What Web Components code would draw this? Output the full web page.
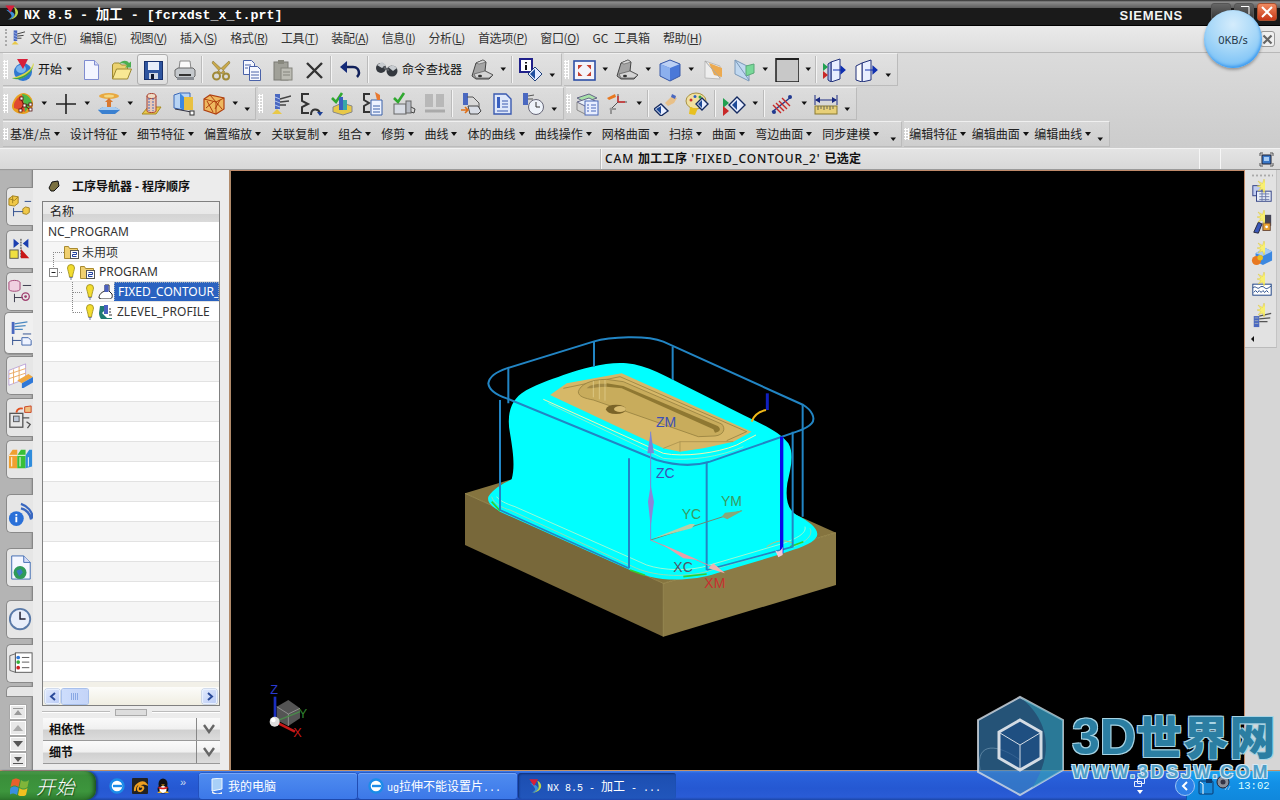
<!DOCTYPE html>
<html lang="zh">
<head>
<meta charset="utf-8">
<title>NX 8.5</title>
<style>
  html, body { margin: 0; padding: 0; background: #000; }
  body { font: 12px "Noto Sans", "Noto Sans CJK SC", sans-serif; color: #222; }
</style>
</head>
<body>
<nx-app>
  <nx-titlebar></nx-titlebar>
  <nx-menubar></nx-menubar>

  <nx-toolrow>
    <nx-toolbar>
      <nx-tool icon="start" w="30"></nx-tool>
      <nx-label w="25">开始</nx-label><nx-drop></nx-drop>
      <nx-tool icon="new"></nx-tool><nx-tool icon="open"></nx-tool><nx-tool icon="save" hot></nx-tool><nx-tool icon="print"></nx-tool>
      <nx-sep w="6"></nx-sep>
      <nx-tool icon="cut"></nx-tool><nx-tool icon="copy"></nx-tool><nx-tool icon="paste"></nx-tool><nx-tool icon="del"></nx-tool>
      <nx-sep w="5"></nx-sep>
      <nx-tool icon="undo"></nx-tool>
      <nx-sep w="7"></nx-sep>
      <nx-tool icon="bino" w="30"></nx-tool>
      <nx-label w="64.500">命令查找器</nx-label>
      <nx-tool icon="part"></nx-tool><nx-drop></nx-drop>
      <nx-sep w="6"></nx-sep>
      <nx-tool icon="info"></nx-tool><nx-drop small></nx-drop>
    </nx-toolbar>
    <nx-toolbar>
      <nx-tool icon="fit"></nx-tool><nx-drop></nx-drop>
      <nx-tool icon="part"></nx-tool><nx-drop></nx-drop>
      <nx-tool icon="cube"></nx-tool><nx-drop></nx-drop>
      <nx-tool icon="plane"></nx-tool><nx-tool icon="teal"></nx-tool><nx-drop></nx-drop>
      <nx-tool icon="box"></nx-tool><nx-drop></nx-drop>
      <nx-sep w="4"></nx-sep>
      <nx-tool icon="door"></nx-tool><nx-tool icon="door2" w="33"></nx-tool><nx-drop small></nx-drop>
    </nx-toolbar>
  </nx-toolrow>

  <nx-toolrow>
    <nx-toolbar>
      <nx-tool icon="shape" w="30"></nx-tool><nx-drop></nx-drop>
      <nx-tool icon="plus"></nx-tool><nx-drop></nx-drop>
      <nx-tool icon="datum"></nx-tool><nx-drop></nx-drop>
      <nx-tool icon="cyl"></nx-tool><nx-tool icon="bluebox"></nx-tool><nx-tool icon="wire"></nx-tool><nx-drop></nx-drop>
      <nx-drop small></nx-drop>
    </nx-toolbar>
    <nx-toolbar>
      <nx-tool icon="mill" w="32"></nx-tool><nx-tool icon="path"></nx-tool><nx-tool icon="verify"></nx-tool><nx-tool icon="post"></nx-tool><nx-tool icon="check"></nx-tool><nx-tool icon="book" off></nx-tool>
      <nx-sep w="5.500"></nx-sep>
      <nx-tool icon="flow"></nx-tool><nx-tool icon="sheet"></nx-tool><nx-tool icon="clock2"></nx-tool><nx-drop small></nx-drop>
    </nx-toolbar>
    <nx-toolbar>
      <nx-tool icon="stack" w="32"></nx-tool><nx-tool icon="axes"></nx-tool><nx-drop></nx-drop>
      <nx-sep w="5"></nx-sep>
      <nx-tool icon="brush"></nx-tool><nx-tool icon="palette"></nx-tool>
      <nx-sep w="6"></nx-sep>
      <nx-tool icon="render"></nx-tool><nx-drop></nx-drop>
      <nx-sep w="6"></nx-sep>
      <nx-tool icon="hatch"></nx-tool><nx-drop></nx-drop>
      <nx-tool icon="ruler"></nx-tool><nx-drop small></nx-drop>
    </nx-toolbar>
  </nx-toolrow>

  <nx-toolrow short>
    <nx-toolbar short>
      <nx-menu-drop style="margin-right:8.100px">基准/点</nx-menu-drop><nx-menu-drop>设计特征</nx-menu-drop><nx-menu-drop>细节特征</nx-menu-drop><nx-menu-drop>偏置缩放</nx-menu-drop><nx-menu-drop>关联复制</nx-menu-drop><nx-menu-drop>组合</nx-menu-drop><nx-menu-drop>修剪</nx-menu-drop><nx-menu-drop>曲线</nx-menu-drop><nx-menu-drop>体的曲线</nx-menu-drop><nx-menu-drop>曲线操作</nx-menu-drop><nx-menu-drop>网格曲面</nx-menu-drop><nx-menu-drop>扫掠</nx-menu-drop><nx-menu-drop>曲面</nx-menu-drop><nx-menu-drop>弯边曲面</nx-menu-drop><nx-menu-drop>同步建模</nx-menu-drop>
      <nx-drop small></nx-drop>
    </nx-toolbar>
    <nx-toolbar short>
      <nx-menu-drop style="margin-left:0;margin-right:3.400px">编辑特征</nx-menu-drop><nx-menu-drop style="margin-right:3.400px">编辑曲面</nx-menu-drop><nx-menu-drop style="margin-right:3.400px">编辑曲线</nx-menu-drop>
      <nx-drop small></nx-drop>
    </nx-toolbar>
  </nx-toolrow>

  <nx-status></nx-status>

  <nx-main>
    <nx-tabstrip></nx-tabstrip>
    <nx-navigator></nx-navigator>
    <nx-viewport></nx-viewport>
    <nx-rightbar></nx-rightbar>
  </nx-main>

  <nx-taskbar></nx-taskbar>

  <nx-bubble></nx-bubble>
  <nx-watermark></nx-watermark>
</nx-app>

<script>
const ICONS = {
  nx: `<path d="M3 8c6 1 13 4 12 9-1 3-6 5-10 5 4-2 7-4 5-7-1-2-4-5-7-7z" fill="#3a8fd8"/><path d="M14 4c6 3 8 9 3 14-2 2-6 4-10 4 6-2 9-5 9-9 0-3-1-6-2-9z" fill="#bcd64a"/><path d="M2 2h13l-6 10z" fill="#d8203a"/>`,
  start: `<circle cx="12" cy="14" r="9" fill="#2f78d0"/><ellipse cx="10" cy="11" rx="5" ry="4" fill="#7cb6ee"/><path d="M1 20c7 3 17-1 21-11 1-2 1-3 0-4 0 5-8 12-21 15z" fill="#d6d84a"/><path d="M1 20c8 1 17-4 21-11-2 8-13 15-21 11z" fill="#39a04a"/><path d="M6 1h11l-5 10z" fill="#d8203a"/>`,
  new: `<path d="M5.500 2.500h10l4 4.500v14.500h-14z" fill="#f3f5ff" stroke="#7f8cd0"/><path d="M15.500 2.500v4.500h4" fill="#d5dbf6" stroke="#7f8cd0"/>`,
  open: `<path d="M2.500 21V6.500l2-1.500h5l2 2h6v4" fill="#ecd270" stroke="#9c8830"/><path d="M2.500 21l4-10h15l-4 10z" fill="#f8e894" stroke="#9c8830"/><path d="M9 6c3-4 8-4 10-1l2-1.500v6h-6l2-2c-2-2-5-3-8-1.500z" fill="#4cae50"/>`,
  save: `<rect x="3.500" y="3.500" width="18" height="18" fill="#2f559f" stroke="#18306c"/><rect x="7" y="4" width="11" height="8" fill="#e8eefa"/><rect x="8" y="15" width="9" height="6" fill="#cfd6e4"/><rect x="10" y="16" width="3" height="5" fill="#101830"/>`,
  print: `<path d="M8 3h10l1 8H7z" fill="#fafafa" stroke="#888"/><path d="M3 12l3-2h15l2 2v6l-2 2H5l-2-2z" fill="#c4c8cc" stroke="#666"/><path d="M5 19h17v3H5z" fill="#8a8e94"/><rect x="7" y="16" width="12" height="2" fill="#333"/>`,
  cut: `<path d="M8 14L20 3 21 5 11 16zM16 14L4 3 3 5 13 16z" fill="#c8a84a" stroke="#7c6a2a" stroke-width=".5"/><circle cx="7.500" cy="18" r="3.500" fill="none" stroke="#a08a3a" stroke-width="2"/><circle cx="17" cy="18.500" r="3" fill="none" stroke="#a08a3a" stroke-width="2"/>`,
  copy: `<path d="M3.500 2.500h8l3 3v11h-11z" fill="#f6f8ff" stroke="#4a62a8"/><path d="M9.500 8.500h8l3 3v11h-11z" fill="#f6f8ff" stroke="#4a62a8"/><path d="M5 7h6M5 10h3M11 14h8M11 17h8M11 20h8" stroke="#4a62a8"/>`,
  paste: `<rect x="3" y="4" width="14" height="18" fill="#a0a098" stroke="#7a7a74"/><rect x="7" y="2" width="6" height="4" fill="#88887e"/><rect x="10" y="10" width="11" height="12" fill="#bcbcb4" stroke="#84847c"/><path d="M12 14h7M12 17h7" stroke="#84847c"/>`,
  del: `<path d="M5 5l15 15M20 5L5 20" stroke="#333" stroke-width="2.400"/>`,
  undo: `<path d="M6 9h9c4 0 6 3 6 6 0 2-1 3-2 4" fill="none" stroke="#10205a" stroke-width="2.600"/><path d="M9 3v12L2 9z" fill="#142a78"/>`,
  bino: `<circle cx="6" cy="10" r="5" fill="#34383e"/><circle cx="17" cy="13" r="5.500" fill="#34383e"/><path d="M2 7l5-3 4 3-4 3z" fill="#c8ccd0"/><path d="M13 9l5-2 4 3-4 3z" fill="#c8ccd0"/><path d="M8 8l6 3v2l-5-2z" fill="#60646a"/>`,
  part: `<path d="M2 18L6 5l7-3 3 2-1 9 8 4-4 4H6z" fill="#a4a4a4" stroke="#444"/><path d="M6 5l7-3 3 2-7 2z" fill="#d8d8d8" stroke="#444" stroke-width=".5"/><path d="M4 16l11-3 8 4-4 3-13 0z" fill="#d4d4d4" stroke="#444" stroke-width=".6"/><ellipse cx="10" cy="18" rx="2" ry="1.200" fill="#333"/>`,
  info: `<rect x="1" y="1" width="12" height="13" fill="#fff" stroke="#20208a" stroke-width="2"/><path d="M6 4h2v1.500H6zM6 7h2v5H6z" fill="#111"/><path d="M16 9l7 7-7 7-7-7z" fill="#e4ecff" stroke="#20407a"/><path d="M16 11l-5 5 5 5z" fill="#2050a0"/>`,
  fit: `<rect x="2" y="3" width="21" height="19" fill="#f4f4fa" stroke="#2d4fa6" stroke-width="1.600"/><path d="M6 7h4.500L6 11.500zM19 7h-4.500l4.500 4.500zM6 18h4.500L6 13.500zM19 18h-4.500l4.500-4.500z" fill="#c84030"/>`,
  cube: `<path d="M12 2l10 4v12l-10 5-10-5V6z" fill="#4a78d8"/><path d="M12 2l10 4-10 4L2 6z" fill="#bcd0f4"/><path d="M2 6l10 4v13l-10-5z" fill="#8cb0ee"/><path d="M12 2l10 4v12l-10 5-10-5V6z" fill="none" stroke="#3a5aa8"/>`,
  plane: `<path d="M4 3l15 5v13L4 20z" fill="#eee" stroke="#bbb"/><path d="M8 5l13 5v9l-8-2z" fill="#ecaa50"/><path d="M4 3l15 17" stroke="#aaa"/>`,
  teal: `<path d="M3 2l14 7v14L3 16z" fill="#c0d8f0" stroke="#7a98b8"/><path d="M14 8l8-2v9l-8 3z" fill="#78d898" stroke="#5aa878"/><path d="M3 2l14 20" stroke="#7a98b8"/>`,
  box: `<rect x="1" y="0" width="23" height="24" fill="#c8c8c8" stroke="#111" stroke-width="1.400"/><rect x="1" y="0" width="23" height="2" fill="#222"/>`,
  door: `<path d="M9 4l9-3v20l-9 3z" fill="#e8eeff" stroke="#20307a"/><path d="M9 4v20l-3-2V6z" fill="#a8b8e8" stroke="#20307a"/><path d="M1 5l5 4-5 4z" fill="#20a050"/><path d="M1 13l5 4-5 4z" fill="#c82828"/><path d="M11 12h12M19 8.500l4 3.500-4 3.500z" stroke="#1030b0" fill="#1030b0" stroke-width="1.200"/>`,
  door2: `<path d="M8 5l9-3v20l-9 2z" fill="#e8eeff" stroke="#20307a"/><path d="M8 5v19l-6-2V8z" fill="#fafafa" stroke="#20307a"/><path d="M11 12h12M19 8.500l4 3.500-4 3.500z" stroke="#1030b0" fill="#1030b0" stroke-width="1.200"/>`,
  shape: `<path d="M1 13C3 5 8 1 13 1c5 1 9 5 9 11 0 5-5 10-10 10S0 19 1 13z" fill="#e8a020"/><path d="M11 2c5 0 9 4 10 9l-7 9z" fill="#4cb848"/><path d="M3 16c-1-6 3-10 8-13l3 17z" fill="#e04830"/><path d="M10 7l3 6 5 4M13 13l-4 5M13 13h5" stroke="#511" fill="none"/><g fill="#fff" stroke="#511" stroke-width=".8"><rect x="9" y="5" width="3" height="3"/><rect x="12" y="12" width="3" height="3"/><rect x="8" y="17" width="3" height="3"/><rect x="18" y="16" width="3" height="3"/><rect x="18" y="11" width="3" height="3"/></g>`,
  plus: `<path d="M12 2v20M2 12h20" stroke="#222" stroke-width="1.600"/>`,
  datum: `<ellipse cx="12" cy="4" rx="10" ry="3" fill="#e8a840"/><ellipse cx="12" cy="4" rx="5" ry="1.500" fill="#f4d880"/><path d="M10 16V10H8l4-4 4 4h-2v6z" fill="#d87830"/><path d="M1 18l5-3h12l5 3-5 4H5z" fill="#3a80d0"/><path d="M6 15h12l5 3H1z" fill="#a8ccf0"/>`,
  cyl: `<path d="M2 22l6-7h13l-5 7z" fill="#e8c848" stroke="#a88a20"/><path d="M7 4v15c0 2 9 2 9 0V4z" fill="#e8c8b8" stroke="#a84030"/><ellipse cx="11.500" cy="4" rx="4.500" ry="2.500" fill="#f0dcc4" stroke="#a84030"/><path d="M9 6v13M13 6v13" stroke="#4a6ab8" stroke-dasharray="2 1"/>`,
  bluebox: `<path d="M3 3l6-2h10v13l-6 4-10-2z" fill="#b8d4f4" stroke="#3a68b8"/><path d="M9 1v15l4 2V5z" fill="#3c88e0"/><path d="M13 5h9v13h-9z" fill="#e8c040"/><path d="M4 17l11 2 5 1" stroke="#334" fill="none"/><rect x="19" y="19" width="4" height="4" fill="#fff" stroke="#333"/>`,
  wire: `<path d="M2 7l6-4 14 3v11l-8 5-12-4z" fill="#eeb860" stroke="#b04010" stroke-width="1.200"/><path d="M2 7l12 3v12M14 10l8-4M5 9l6 11M12 9l-8 7M8 3l12 14M18 8l-5 9" stroke="#b04010" fill="none"/>`,
  mill: `<path d="M8 2h5v15H8z" fill="#4a68c0"/><path d="M8 5l5 2M8 9l5 2M8 13l5 2" stroke="#b0c4ee"/><path d="M13 7l11-3M13 10l9-1M13 13l6 0" stroke="#444" stroke-width="1.400"/><path d="M5 22l5-5 5 5z" fill="#e8c848"/>`,
  path: `<path d="M10 2H3v7l6 3-6 3v6h7" fill="none" stroke="#333" stroke-width="2"/><path d="M12 23c0-7 7-7 9-2" fill="none" stroke="#333" stroke-width="2"/><path d="M18 20h6l-3 4z" fill="#1c3f94"/>`,
  verify: `<path d="M2 6l4 4 6-9" fill="none" stroke="#30a830" stroke-width="2.600"/><path d="M3 15l9-4 10 3v6l-9 3-10-3z" fill="#e8c848" stroke="#888"/><rect x="9" y="5" width="4" height="13" fill="#3a60c0"/><rect x="13" y="8" width="4" height="10" fill="#38a8a8"/>`,
  post: `<path d="M9 2H3v6l5 3-5 3v6h6" fill="none" stroke="#333" stroke-width="2"/><path d="M10 8h11v15H10z" fill="#eef3ff" stroke="#3a60a8"/><path d="M12 14h7M12 17h7M12 20h7" stroke="#3a60a8"/><path d="M14 0l5 3v5h-3z" fill="#e87830"/>`,
  check: `<path d="M2 6l4 4 6-9" fill="none" stroke="#30a830" stroke-width="2.600"/><rect x="2" y="12" width="12" height="10" fill="#d8dce4" stroke="#666"/><rect x="14" y="9" width="5" height="12" fill="#b8bcc4" stroke="#666"/><path d="M19 15l4 2-1 4-3-1" fill="none" stroke="#444"/>`,
  book: `<rect x="2" y="2" width="8" height="13" fill="#b8b8b8"/><rect x="13" y="2" width="8" height="13" fill="#b8b8b8"/><path d="M2 19h20" stroke="#aaa" stroke-width="3"/>`,
  flow: `<path d="M4 1h5v12H4z" fill="#4a68c0"/><path d="M8 5h6l6 6v9" fill="none" stroke="#555"/><path d="M9 14h10l3 5-3 3H11z" fill="#d8dce4" stroke="#444"/><path d="M2 18h7M6 15l3 3-3 3" stroke="#e07018" fill="none" stroke-width="1.600"/>`,
  sheet: `<path d="M4 2h12l5 5v15H4z" fill="#dfe8fa" stroke="#3a5ab0" stroke-width="1.400"/><rect x="7" y="5" width="3" height="11" fill="#3a60c0"/><path d="M12 9h6M12 12h6M12 15h6M7 19h11" stroke="#3a5ab0"/>`,
  clock2: `<path d="M2 1h5v12H2z" fill="#4a68c0"/><path d="M7 4l6-1M7 7l5 0" stroke="#555"/><circle cx="15" cy="15" r="7.500" fill="#eef3fa" stroke="#667"/><path d="M15 10v5h4" stroke="#333" fill="none"/>`,
  stack: `<path d="M2 6l12-4 8 4-12 4z" fill="#a8e0a8" stroke="#668"/><path d="M2 10l12-4 8 4-12 4z" fill="#e8f0f8" stroke="#668"/><rect x="10" y="9" width="13" height="14" fill="#e8eeff" stroke="#4a68b8"/><path d="M12 13h2M16 13h5M12 16h2M16 16h5M12 19h2M16 19h5" stroke="#4a68b8"/><path d="M2 10v8l8 4" fill="none" stroke="#888"/>`,
  axes: `<path d="M12 10v-8M12 10h9M12 10l-7 7M5 17v5M5 17h5" stroke="#555" fill="none"/><path d="M12 10v-6M12 10h7" stroke="#d03030" fill="none" stroke-width="1.400"/><path d="M1 6l8-4 1 3-7 3z" fill="#e87820"/><circle cx="5" cy="17" r="1.500" fill="#999"/>`,
  brush: `<path d="M11 11l7-7 5 2-3 5-6 3z" fill="#e8c088"/><path d="M18 2l4 2-1 3-4-2z" fill="#4a68c0"/><path d="M7 12l7 7-7 5-7-7z" fill="#e8eeff" stroke="#142a60" stroke-width="1.400"/><path d="M7 14v8l-5-5z" fill="#1e4a98"/>`,
  palette: `<ellipse cx="11" cy="9" rx="10" ry="8" fill="#f0e0a0" stroke="#a89040"/><circle cx="6" cy="8" r="1.500" fill="#d03030"/><circle cx="10" cy="4.500" r="1.500" fill="#3060c0"/><circle cx="15" cy="5" r="1.500" fill="#30a040"/><path d="M5 15c3 0 3 2 8 1l-3 7-6-1z" fill="#e8c020"/><path d="M17 6l6 6-6 6-6-6z" fill="#e8eeff" stroke="#142a60" stroke-width="1.400"/><path d="M17 8v8l-4-4z" fill="#1e4a98"/>`,
  render: `<path d="M1 6l6 5-6 5z" fill="#20a050"/><path d="M1 14l6 5-6 5z" fill="#c82828"/><path d="M15 5l8 8-8 8-8-8z" fill="#e8eeff" stroke="#142a60" stroke-width="1.400"/><path d="M15 8v10l-5-5z" fill="#1e4a98"/>`,
  hatch: `<path d="M1 20L20 5" stroke="#223a90" stroke-width="1.400"/><path d="M5 11l8 8M8 9l8 8M11 6l8 8M2 13l8 8" stroke="#c82828" stroke-width="1.400"/><circle cx="3" cy="20" r="2" fill="#223a90"/><circle cx="19" cy="5" r="2" fill="#223a90"/>`,
  ruler: `<path d="M1 3v10M23 3v10" stroke="#1a2a80"/><path d="M2 8h20" stroke="#1a2a80"/><path d="M6 5v6L1 8zM18 5v6l5-3z" fill="#1a2a80"/><rect x="1" y="14" width="22" height="8" fill="#e8d078" stroke="#8a7a30"/><path d="M4 14v4M7 14v3M10 14v4M13 14v3M16 14v4M19 14v3" stroke="#665"/>`,
  tab1: `<path d="M1 5l4-3 6 1v7l-4 3-6-1z" fill="#f0c848" stroke="#a08020"/><path d="M5 2v8M1 5l6 2M11 3l-4 4" stroke="#a08020" fill="none"/><path d="M16 16l3-2 4 1v5l-3 2-4-1z" fill="#f0c848" stroke="#a08020"/><path d="M6 15v9M6 19h10M18 8h7" stroke="#2a4a8a" fill="none"/>`,
  tab2: `<path d="M6 2l6 5-6 5zM22 2l-6 5 6 5z" fill="#1c3fb0"/><path d="M14 2v20" stroke="#222" stroke-dasharray="2 1"/><rect x="2" y="14" width="9" height="9" fill="#f0e040" stroke="#555"/><path d="M14 13l9 10h-9z" fill="#c81818"/>`,
  tab3: `<ellipse cx="7" cy="4" rx="6" ry="2.500" fill="#f0d0e0" stroke="#a04070"/><path d="M1 4v7c0 3 12 3 12 0V4" fill="#f0d0e0" stroke="#a04070"/><path d="M7 16v9M7 20h9M16 7h9" stroke="#334" fill="none"/><circle cx="19" cy="19" r="4" fill="none" stroke="#a04070" stroke-width="1.400"/><circle cx="19" cy="19" r="1.500" fill="#a04070"/>`,
  tab4: `<rect x="4" y="1" width="3" height="13" fill="#4a68c0"/><path d="M7 3l14-2M7 6l12-1M7 9l9 0" stroke="#4a88c0" stroke-width="1.400"/><path d="M5 17v9M5 21h9M16 14h9" stroke="#2a4a8a" fill="none"/><path d="M15 18h7l3 3v5H15z" fill="#eef3ff" stroke="#3a60a8"/>`,
  tab5: `<path d="M1 8l18-7v16L1 24z" fill="#fff" stroke="#8a5ac0" stroke-width=".5"/><path d="M1 12l18-6M1 17l18-6M6 7v15M12 4v15" stroke="#e8a860" /><path d="M10 19l12-7 5 3-12 7z" fill="#f0a840"/><path d="M15 22l12-7v6l-12 7z" fill="#2f78d8"/>`,
  tab6: `<rect x="2" y="9" width="14" height="15" fill="#e8e8e8" stroke="#555" stroke-width="1.400"/><rect x="6" y="12" width="6" height="6" fill="#bcc8d8" stroke="#555"/><path d="M16 14h7M20 18l4 3-3 4" stroke="#555" fill="none" stroke-width="1.400"/><path d="M18 2l7-1v7h-7z" fill="#f0c080" stroke="#c84020"/><path d="M9 8c1-4 4-5 7-4" stroke="#e05020" fill="none" stroke-width="2"/>`,
  tab7: `<path d="M1 9l4-6h5v20H1z" fill="#f0a030"/><path d="M10 9l4-6h5v20h-9z" fill="#38c038"/><path d="M19 9l4-6h3v18l-7 2z" fill="#2f8cdc"/><path d="M1 9h9M10 9h9M4 11v10M13 11v10M22 11v10" stroke="#fff" />`,
  tab8: `<path d="M14 8a14 14 0 0 1 11 12M14 3a19 19 0 0 1 13 16" fill="none" stroke="#3a68c0" stroke-width="2.600"/><circle cx="9" cy="19" r="8" fill="#2a70d8"/><path d="M8 14h2v2H8zM8 17h2v6H8z" fill="#fff"/>`,
  tab9: `<path d="M4 1h13l7 7v18H4z" fill="#f4f6ff" stroke="#3a68b0"/><path d="M17 1v7h7" fill="#d5dbf6" stroke="#3a68b0"/><circle cx="13" cy="19" r="7" fill="#2f9a5a"/><path d="M9 17l5-2 2 4-4 4z" fill="#3a78c8"/>`,
  tab10: `<circle cx="13" cy="13" r="11" fill="#e8eefa" stroke="#5a7aa8" stroke-width="2"/><path d="M13 5v8h6" fill="none" stroke="#223" stroke-width="1.600"/>`,
  tab11: `<path d="M2 5l6-2v20l-6-2z" fill="#e8e8e8" stroke="#666"/><rect x="8" y="2" width="18" height="21" fill="#fff" stroke="#555"/><circle cx="11" cy="7" r="2" fill="#2f78d8"/><circle cx="11" cy="12" r="2" fill="#38b038"/><circle cx="11" cy="18" r="2" fill="#d02020"/><path d="M15 7h8M15 12h8M15 18h8" stroke="#555"/>`,
  bulb: `<path d="M4.500 4a3.500 3.500 0 0 1 7 0c0 1.500-1.500 5-2 9h-3c-.5-4-2-7.500-2-9z" fill="#f2dc30" stroke="#988818" stroke-width=".8"/><path d="M6.500 13.500h3M7 15h2" stroke="#707898"/>`,
  folder: `<path d="M.5 2.500h4l1 2h8v10H.5z" fill="#f0d070" stroke="#a88a30"/><rect x="6.500" y="6.500" width="8" height="8" fill="#fff" stroke="#555"/><path d="M8.500 8.500h4v2h-4v2h4" fill="none" stroke="#2040a0"/>`,
  opfix: `<path d="M1 14c0-4 3-6 6-7V1h4v6l3 3c1 4-1 5-3 5H3z" fill="#fff" stroke="#222"/><rect x="6.500" y="1" width="4" height="7" fill="#4a60c0"/>`,
  opz: `<path d="M2 2h5v4l-3 3 5 5h5v3H6c-3 0-5-5-5-8z" fill="#1e7a72"/><rect x="6" y="1" width="4" height="9" fill="#4a60c0"/><path d="M11 5h2M11 8h2M11 11h3" stroke="#333"/>`,
  spark1: `<rect x="2" y="4" width="10" height="11" fill="#c0ccf0" stroke="#2a3a80"/><rect x="6" y="10" width="16" height="11" fill="#e8eef8" stroke="#2a3a80"/><path d="M9 13h11M9 16h11M9 19h11M12 10v11M16 10v11" stroke="#6a78a8"/>`,
  spark2: `<path d="M3 21l5-11 4 2-4 10z" fill="#3a58b8" stroke="#223"/><rect x="15" y="2" width="7" height="12" fill="#445"/><rect x="13" y="11" width="8" height="8" fill="#e8a030" stroke="#643"/><circle cx="17" cy="15" r="1.500" fill="#fff"/>`,
  spark3: `<path d="M5 10l10-6 8 4v10l-10 5-8-4z" fill="#3c88e0"/><path d="M5 10l10-6 8 4-10 5z" fill="#a8ccf4"/><circle cx="6" cy="18" r="5" fill="#e87820"/><circle cx="10" cy="15" r="3" fill="#e8c020"/>`,
  spark4: `<rect x="2" y="10" width="20" height="12" fill="#fff" stroke="#123a80"/><path d="M2 14c3-3 5 2 7 0s4-2 6 0 4 0 7-2M3 19l2-2 2 2 2-2 2 2 2-2 2 2 2-2 2 2" fill="none" stroke="#123a80"/>`,
  spark5: `<rect x="3" y="11" width="6" height="12" fill="#4a68c0"/><path d="M4 13h4M4 16h4M4 19h4" stroke="#9ab"/><path d="M9 11l13-3M9 14l12-1M9 17l9 0" stroke="#555" stroke-width="1.400"/>`,
  flag: `<path d="M2 4c3-2 5-2 8 0l-1.500 7c-3-2-5-2-8 0z" fill="#e8602c"/><path d="M11 4c3 2 5 2 8 0l-1.500 7c-3 2-5 2-8 0z" fill="#7fb53a"/><path d="M.5 12c3-2 5-2 8 0L7 19c-3-2-5-2-8 0z" fill="#3a8fe0"/><path d="M9.500 12c3 2 5 2 8 0L16 19c-3 2-5 2-8 0z" fill="#f0c020"/>`,
  ie: `<circle cx="8" cy="8" r="6.500" fill="#fff" stroke="#1c8ce8" stroke-width="2.400"/><path d="M4 8h9" stroke="#1c8ce8" stroke-width="2.400"/>`,
  ball: `<rect width="16" height="16" rx="1" fill="#222"/><path d="M3 13c-1-7 8-11 11-7-3-1-7 0-8 4s4 4 5 1c1-2-1-3-3-2" fill="none" stroke="#f0a020" stroke-width="2"/>`,
  qq: `<ellipse cx="8" cy="6" rx="4.500" ry="5.500" fill="#111"/><ellipse cx="8" cy="11" rx="5.500" ry="4.500" fill="#111"/><ellipse cx="8" cy="11.500" rx="3.500" ry="3.500" fill="#fff"/><path d="M4 8.500c2 1.500 6 1.500 8 0l1 1.500c-3 1.800-7 1.800-10 0z" fill="#d81e1e"/><path d="M6 6.500h4l-2 1.500z" fill="#f0b020"/><path d="M2 15h5l-2-2zM9 15h5l-2-2z" fill="#f0b020"/>`,
  pc: `<path d="M3 1l10-1v11L3 13z" fill="#a8d0f8" stroke="#f0f8ff"/><path d="M3 13c3 3 7 3 10 1v2c-3 1-7 1-10-1z" fill="#f4f4f4"/>`
};

class NxBase extends HTMLElement {
  constructor() {
    super();
    this.attachShadow({ mode: 'open' });
  }
}

class NxIcon extends NxBase {
  connectedCallback() {
    const size = this.getAttribute('size') || 24;
    const box = this.getAttribute('box') || 24;
    this.shadowRoot.innerHTML = `
      <style>:host { display: block; flex: none; width: ${size}px; height: ${size}px; } svg { display: block; }</style>
      <svg width="${size}" height="${size}" viewBox="0 0 ${box} ${box}">${ICONS[this.getAttribute('name')]}</svg>`;
  }
}

class NxApp extends NxBase {
  connectedCallback() {
    this.shadowRoot.innerHTML = `
      <style>:host { display: flex; flex-direction: column; position: relative; width: 1280px; height: 800px; overflow: hidden;
        background: linear-gradient(#e4e4e4, #c8c8c8 170px); }</style>
      <slot></slot>`;
  }
}

class NxTitlebar extends NxBase {
  connectedCallback() {
    this.shadowRoot.innerHTML = `
      <style>
        :host { display: flex; align-items: center; height: 26px; flex: none; box-sizing: border-box; padding: 8px 3px 1px 4px;
          background: linear-gradient(#2a2a2a 0, #8c8c8c 2px, #5c5c5c 8px, #1a1a1a 8px, #1a1a1a 25px, #000 25px); color: #fff; position: relative; }
        .logo { width: 17px; height: 17px; margin-top: -8px; }
        .title { margin-left: 3px; margin-top: -6px; font: bold 13.33px "Liberation Mono", "Noto Sans CJK SC", monospace; white-space: pre; }
        .brand { margin-left: auto; margin-right: 28px; font: bold 13px "Liberation Sans", sans-serif; letter-spacing: .7px; color: #f2f4f4; margin-top: -3px; }
        .btns { display: flex; gap: 3px; margin-top: -10px; }
        .btn { width: 20px; height: 18px; border: 1px solid #555; border-radius: 3px; box-sizing: border-box; background: linear-gradient(#666, #333); display: flex; align-items: center; justify-content: center; }
        .close { background: linear-gradient(#f08a60, #c83818); border-color: #a85030; }
      </style>
      <nx-icon class="logo" name="nx" size="17"></nx-icon>
      <span class="title">NX 8.5 - 加工 - [fcrxdst_x_t.prt]</span>
      <span class="brand">SIEMENS</span>
      <div class="btns">
        <div class="btn"></div>
        <div class="btn"><svg width="12" height="12"><path d="M3 .5h8v8" fill="none" stroke="#fff"/></svg></div>
        <div class="btn close"><svg width="12" height="12"><path d="M1 1l10 10M11 1L1 11" stroke="#fff" stroke-width="2"/></svg></div>
      </div>`;
  }
}

class NxMenubar extends NxBase {
  connectedCallback() {
    const items = [['文件', 'F'], ['编辑', 'E'], ['视图', 'V'], ['插入', 'S'], ['格式', 'R'], ['工具', 'T'], ['装配', 'A'], ['信息', 'I'],
      ['分析', 'L'], ['首选项', 'P'], ['窗口', 'O'], ['GC 工具箱', ''], ['帮助', 'H']];
    this.shadowRoot.innerHTML = `
      <style>
        :host { display: flex; align-items: center; height: 27px; flex: none; box-sizing: border-box; padding-left: 5px; padding-bottom: 3px;
          background: linear-gradient(#eaeaea, #dedede); border-bottom: 1px solid #b8b8b8; font: 12px "Noto Sans CJK SC", sans-serif; color: #333; }
        .grip { width: 3px; height: 17px; border-left: 2px dotted #aaa; box-sizing: border-box; }
        .logo { margin-right: 5px; }
        .items { display: flex; gap: 13px; letter-spacing: -.4px; }
        .wide { letter-spacing: 0; word-spacing: 3px; }
        u { text-underline-offset: 1px; }
        .close { margin-left: auto; margin-right: 5px; margin-top: 3px; width: 15px; height: 16px; box-sizing: border-box; border: 1px solid #999; border-radius: 3px; background: #f0f0f0; display: flex; align-items: center; justify-content: center; }
      </style>
      <div class="grip"></div>
      <nx-icon class="logo" name="mill" size="17"></nx-icon>
      <div class="items">${items.map(([t, k]) => `<span class="${k ? '' : 'wide'}">${t}${k ? `(<u>${k}</u>)` : ''}</span>`).join('')}</div>
      <div class="close"><svg width="11" height="11"><path d="M1.500 1.500l8 8M9.500 1.500l-8 8" stroke="#666" stroke-width="2.200"/></svg></div>`;
  }
}

class NxToolrow extends NxBase {
  connectedCallback() {
    const h = this.hasAttribute('short') ? 27 : 34;
    this.shadowRoot.innerHTML = `
      <style>:host { display: flex; flex: none; height: ${h}px; padding-left: 3px; gap: 2px; box-sizing: border-box; }</style>
      <slot></slot>`;
  }
}

class NxToolbar extends NxBase {
  connectedCallback() {
    this.shadowRoot.innerHTML = `
      <style>
        :host { display: flex; align-items: center; box-sizing: border-box; margin: 0 0 1px; padding-right: 2px;
          background: linear-gradient(rgba(255,255,255,.18), rgba(255,255,255,.04)); border-top: 1px solid #f0f0f0; border-right: 1px solid #bbb; border-bottom: 1px solid #bbb; }
        .grip { width: 5px; flex: none; align-self: stretch; margin: 6px 0; box-sizing: border-box; background: radial-gradient(circle, #fff 1px, transparent 1.200px) 0 0 / 3px 3px; }
      </style>
      <div class="grip"></div>
      <slot></slot>`;
  }
}

class NxTool extends NxBase {
  connectedCallback() {
    const w = this.getAttribute('w') || 31;
    const hot = this.hasAttribute('hot');
    this.shadowRoot.innerHTML = `
      <style>
        :host { display: flex; align-items: center; justify-content: center; flex: none; width: ${w}px; height: 31px; box-sizing: border-box;
          ${hot ? 'border: 1px solid #aeaeae; border-radius: 3px; background: linear-gradient(#f2f2f2, #dedede);' : ''} }
      </style>
      <nx-icon name="${this.getAttribute('icon')}"></nx-icon>`;
  }
}

class NxDrop extends NxBase {
  connectedCallback() {
    const small = this.hasAttribute('small');
    this.shadowRoot.innerHTML = `
      <style>
        :host { display: flex; flex: none; width: 12px; align-self: stretch; align-items: center; justify-content: center; }
        svg { display: block; ${small ? 'margin-top: 11px;' : ''} }
      </style>
      <svg width="7" height="5"><path d="M.5 .5h5.500L3.200 4z" fill="#111"/></svg>`;
  }
}

class NxSep extends NxBase {
  connectedCallback() {
    const w = this.getAttribute('w');
    this.shadowRoot.innerHTML = `
      <style>
        :host { display: block; flex: none; align-self: stretch; width: ${w}px; margin: 2px 0; }
        div { height: 100%; width: 1px; margin: 0 auto; background: #f4f4f4; box-shadow: -1px 0 #bbb; }
      </style>
      <div></div>`;
  }
}

class NxLabel extends NxBase {
  connectedCallback() {
    this.shadowRoot.innerHTML = `
      <style>:host { display: block; flex: none; width: ${this.getAttribute('w')}px; padding-bottom: 2px; font: 12px "Noto Sans CJK SC", sans-serif; color: #111; }</style>
      <slot></slot>`;
  }
}

class NxMenuDrop extends NxBase {
  connectedCallback() {
    this.shadowRoot.innerHTML = `
      <style>
        :host { display: flex; align-items: center; flex: none; gap: 3px; margin-left: 2px; margin-right: 8.100px; padding-bottom: 2px; font: 12px "Noto Sans CJK SC", sans-serif; color: #222; }
        svg { display: block; margin-top: 2px; }
      </style>
      <slot></slot>
      <svg width="6" height="4"><path d="M0 0h6L3 4z" fill="#111"/></svg>`;
  }
}

class NxStatus extends NxBase {
  connectedCallback() {
    this.shadowRoot.innerHTML = `
      <style>
        :host { display: flex; align-items: center; flex: none; height: 22px; box-sizing: border-box; border-top: 1px solid #f2f2f2; border-bottom: 1px solid #9a9a9a;
          background: linear-gradient(#e4e4e4, #d8d8d8); font: 12px "Noto Sans", "Noto Sans CJK SC", sans-serif; color: #111; }
        .msg { margin-left: 601px; width: 598px; padding: 0 0 3px 3px; align-self: stretch; display: flex; align-items: center; border-left: 1px solid #f6f6f6; box-shadow: -1px 0 #bbb; box-sizing: border-box; }
        .msg span { font-weight: 500; letter-spacing: .85px; }
        .msg b { letter-spacing: .3px; }
        .cell { width: 20px; align-self: stretch; border-left: 1px solid #f6f6f6; }
        .wide { width: 38px; }
        svg { display: block; margin-top: 1px; }
      </style>
      <div class="msg"><span>CAM <b>加工工序</b> 'FIXED_CONTOUR_2' <b>已选定</b></span></div>
      <div class="cell"></div>
      <div class="cell wide"></div>
      <svg width="15" height="15"><path d="M1 4V1h3M11 1h3v3M14 11v3h-3M4 14H1v-3" fill="none" stroke="#555"/><rect x="3" y="3" width="9" height="9" fill="#3a78c8" stroke="#223"/><rect x="5" y="5" width="5" height="4" fill="#a8ccf4"/></svg>`;
  }
}

class NxMain extends NxBase {
  connectedCallback() {
    this.shadowRoot.innerHTML = `
      <style>:host { display: flex; flex: none; height: 600px; }</style>
      <slot></slot>`;
  }
}

class NxTabstrip extends NxBase {
  connectedCallback() {
    const tabs = [['tab1', 17], ['tab2', 4], ['tab3', 3], ['tab4', 1, 1], ['tab5', 2], ['tab6', 3], ['tab7', 3], ['tab8', 15], ['tab9', 15], ['tab10', 13], ['tab11', 5], ['', 3]];
    this.shadowRoot.innerHTML = `
      <style>
        :host { display: flex; flex-direction: column; flex: none; width: 33px; background: #b4b4b4; box-shadow: inset -2px 0 2px -1px #777; }
        .list { flex: 1; min-height: 0; overflow: hidden; }
        .tab { box-sizing: border-box; height: 39px; margin-left: 6px; border: 1px solid #8a8a8a; border-right: 0; border-radius: 5px 0 0 5px; background: #e6e6e6; display: flex; align-items: center; padding-left: 1px; }
        .on { margin-left: 4px; height: 42px; background: #f0f0f0; padding-left: 3px; box-shadow: 0 1px #999; }
        .stub { background: #e6e6e6; height: 11px; border-radius: 5px 0 0 0; }
        .arrows { flex: none; display: flex; flex-direction: column; gap: 2px; padding: 3px 0 3px 10px; height: 68px; box-sizing: border-box; }
        .arrow { box-sizing: border-box; width: 16px; height: 14px; background: #e8e8e8; border: 1px solid #fff; box-shadow: 0 0 0 .5px #999; display: flex; align-items: center; justify-content: center; }
      </style>
      <div class="list">${tabs.map(([name, top, on]) => `<div class="tab ${on ? 'on' : ''} ${name ? '' : 'stub'}" style="margin-top:${top}px">${name ? `<nx-icon name="${name}" size="25" box="27"></nx-icon>` : ''}</div>`).join('')}</div>
      <div class="arrows">
        <div class="arrow"><svg width="10" height="8"><path d="M0 0h10v1H0zM5 2l4 5H1z" fill="#999"/></svg></div>
        <div class="arrow"><svg width="10" height="6"><path d="M5 0l5 6H0z" fill="#aaa"/></svg></div>
        <div class="arrow"><svg width="10" height="6"><path d="M5 6l5-6H0z" fill="#555"/></svg></div>
        <div class="arrow"><svg width="10" height="8"><path d="M0 7h10v1H0zM5 6L1 1h8z" fill="#555"/></svg></div>
      </div>`;
  }
}

class NxNavigator extends NxBase {
  connectedCallback() {
    this.shadowRoot.innerHTML = `
      <style>
        :host { display: flex; flex-direction: column; flex: none; width: 198px; box-sizing: border-box; padding: 0 9px 6px 9px; background: #ececec; border-right: 2px solid #b08a6a; font: 12px "Noto Sans", "Noto Sans CJK SC", sans-serif; }
        .head { display: flex; align-items: center; height: 31px; flex: none; font-weight: bold; color: #111; }
        .head svg { margin: 0 12px 0 6px; }
        .sash { display: flex; align-items: center; gap: 5px; height: 12px; flex: none; }
        .sash i { flex: 1; height: 0; border-top: 1px solid #bbb; border-bottom: 1px solid #fff; }
        .sash b { width: 30px; height: 5px; border: 1px solid #aaa; background: #ddd; }
        .acc { display: flex; align-items: center; height: 23px; flex: none; font-weight: bold; color: #111; padding-left: 6px; box-sizing: border-box; border-bottom: 1px solid #999;
          background: linear-gradient(#fafafa, #f0f0f0 50%, #d0d0d0 55%, #dcdcdc); margin-left: 1px; }
        .acc span { flex: 1; }
        .acc div { width: 23px; height: 100%; border-left: 1px solid #888; display: flex; align-items: center; justify-content: center; }
      </style>
      <div class="head"><svg width="12" height="12"><path d="M1 8l3-6 6-1 1 5-5 5H3z" fill="#7a7040" stroke="#111"/></svg>工序导航器 - 程序顺序</div>
      <nx-tree></nx-tree>
      <div class="sash"><i></i><b></b><i></i></div>
      <div class="acc"><span>相依性</span><div><svg width="12" height="10"><path d="M1 1l5 7 5-7" fill="none" stroke="#666" stroke-width="2.400"/></svg></div></div>
      <div class="acc"><span>细节</span><div><svg width="12" height="10"><path d="M1 1l5 7 5-7" fill="none" stroke="#666" stroke-width="2.400"/></svg></div></div>`;
  }
}

class NxTree extends NxBase {
  connectedCallback() {
    const dots = 'stroke="#888" stroke-dasharray="1 1"';
    const rows = [
      `<span class="t" style="margin-left:5px">NC_PROGRAM</span>`,
      `<svg class="lead" width="21" height="20"><path d="M10.500 10v10M10 10.500h11" ${dots}/></svg><nx-icon name="folder" size="15" box="15"></nx-icon><span class="t" style="margin-left:3px">未用项</span>`,
      `<svg class="lead" width="20" height="20"><path d="M10.500 0v6M14 10.500h5" ${dots}/><rect x="6.500" y="6.500" width="8" height="8" fill="#fff" stroke="#888"/><path d="M8.500 10.500h4" stroke="#222"/></svg><nx-icon name="bulb" size="16" box="16"></nx-icon><nx-icon name="folder" size="15" box="15" style="margin-left:1px"></nx-icon><span class="t" style="margin-left:4px">PROGRAM</span>`,
      `<svg class="lead" width="39" height="20"><path d="M29.500 0v20M30 10.500h9" ${dots}/></svg><nx-icon name="bulb" size="16" box="16"></nx-icon><nx-icon name="opfix" size="15" box="15"></nx-icon><span class="sel">FIXED_CONTOUR_2</span>`,
      `<svg class="lead" width="39" height="20"><path d="M29.500 0v10.500M30 10.500h9" ${dots}/></svg><nx-icon name="bulb" size="16" box="16"></nx-icon><nx-icon name="opz" size="15" box="15"></nx-icon><span class="t" style="margin-left:4px">ZLEVEL_PROFILE</span>`
    ];
    for (let i = rows.length; i < 23; i++) rows.push('');
    this.shadowRoot.innerHTML = `
      <style>
        :host { display: flex; flex-direction: column; flex: 1; min-height: 0; border: 1px solid #808080; background: #f2f0e8; overflow: hidden; font: 12px "Noto Sans", "Noto Sans CJK SC", sans-serif; color: #333; box-sizing: border-box; }
        .cols { height: 20px; flex: none; box-sizing: border-box; padding-left: 7px; line-height: 19px; color: #222; background: linear-gradient(#ececec, #e8e8e8 60%, #d4d4d4 62%, #dadada); }
        .rows { flex: 1; min-height: 0; overflow: hidden; }
        .row { display: flex; align-items: center; box-sizing: border-box; height: 20px; border-bottom: 1px solid #e2e2e2; background: #fff; overflow: hidden; white-space: nowrap; }
        .row:nth-child(even) { background: #f6f6f6; }
        .lead { flex: none; display: block; }
        .sel { flex: 1; margin-left: 1px; height: 20px; line-height: 19px; padding-left: 4px; background: #2a62c0; color: #fff; outline: 1px dotted #9ab; outline-offset: -1px; overflow: hidden; }
        .scroll { display: flex; align-items: center; height: 18px; flex: none; padding: 0 2px; gap: 2px; background: linear-gradient(#fcfcfa, #f0eee2); box-sizing: border-box; }
        .btn { width: 15px; height: 15px; border-radius: 2px; background: linear-gradient(135deg, #dfe8fc, #bccdf6); border: 1px solid #e8f0ff; box-shadow: 0 0 0 .5px #a8bce0; display: flex; align-items: center; justify-content: center; box-sizing: border-box; }
        .thumb { width: 26px; height: 15px; border-radius: 2px; background: linear-gradient(90deg, #cdddfc, #c4d4f8); box-shadow: 0 0 0 1px #a8c0ec; display: flex; align-items: center; justify-content: center; }
        .thumb svg { display: block; }
        .end { margin-left: auto; }
      </style>
      <div class="cols">名称</div>
      <div class="rows">${rows.map(r => `<div class="row">${r}</div>`).join('')}</div>
      <div class="scroll">
        <div class="btn"><svg width="8" height="9"><path d="M6 1L2 4.500 6 8" fill="none" stroke="#2a4a9a" stroke-width="2"/></svg></div>
        <div class="thumb"><svg width="8" height="7"><path d="M.5 0v7M2.500 0v7M4.500 0v7M6.500 0v7" stroke="#8aa8e4"/></svg></div>
        <div class="btn end"><svg width="8" height="9"><path d="M2 1l4 3.500L2 8" fill="none" stroke="#2a4a9a" stroke-width="2"/></svg></div>
      </div>`;
  }
}

class NxViewport extends NxBase {
  connectedCallback() {
    this.shadowRoot.innerHTML = `
      <style>
        :host { display: block; flex: 1; min-width: 0; background: #000; border-top: 1px solid #c08a6a; border-right: 1px solid #c08a6a; box-sizing: border-box; }
        svg { display: block; }
        text { font-family: "Liberation Sans", sans-serif; }
      </style>
      <svg width="1013" height="599" viewBox="231 171 1013 599">
        <g transform="translate(450 320) scale(.33333)">
          <polygon points="45,520 640,790 640,950 45,675" fill="#78683a"/>
          <polygon points="640,790 1158,638 1158,795 640,950" fill="#8b7b46"/>
          <polygon points="45,520 553,368 1158,638 640,790" fill="#85743f"/>
          <path d="M45 520L640 790L1158 638M640 790V950" fill="none" stroke="#b0a060" stroke-width="2"/>

          <path d="M115 530C130 505 160 490 185 478C195 440 190 400 180 340C170 290 180 245 215 220C250 195 300 180 340 165C400 145 470 125 530 130C590 135 650 170 720 205L880 285C930 310 990 335 1015 370C1035 405 1020 450 1012 490C1005 540 1015 570 1040 585C1080 605 1110 630 1100 650C1085 675 1040 685 1000 700L800 760C740 780 660 785 600 770L540 750L150 575C130 560 110 550 115 530Z" fill="#00ffff"/>
          <path d="M125 530C130 550 160 565 180 570L560 745C620 770 720 775 790 748L1030 680C1070 665 1090 645 1080 625" fill="none" stroke="#a8d8a8" stroke-width="2.500"/>
          <path d="M140 530C145 540 170 552 195 560L590 735C640 752 720 755 780 735L1000 670C1040 655 1070 640 1065 620" fill="none" stroke="#e8f4c0" stroke-width="2"/>
          <path d="M950 680C970 665 1000 655 1030 670" fill="none" stroke="#c8b878" stroke-width="3"/>
          <path d="M125 545L150 572M540 750L585 766M700 770L770 762M1020 680L1060 665" fill="none" stroke="#30d030" stroke-width="5"/>

          <path d="M300 225L350 190L515 160L905 335L850 365L760 385L690 395L640 385Z" fill="#d6b868"/>
          <path d="M280 238L640 400C700 412 800 400 860 375L918 345" fill="none" stroke="#f4f4b0" stroke-width="3"/>
          <path d="M295 250L640 415C720 425 810 410 880 380" fill="none" stroke="#c8e8b8" stroke-width="2"/>
          <path d="M340 205L510 170L890 335L830 362" fill="none" stroke="#8a7638" stroke-width="2"/>
          <path d="M385 215C390 195 420 178 470 178L520 185L815 312C828 325 822 345 795 348L745 350L430 240C405 235 385 230 385 215Z" fill="#c8ac5c" stroke="#8a7638" stroke-width="2"/>
          <path d="M470 190L520 198L803 318C815 327 810 336 795 338L790 328L515 205L470 200Z" fill="#8f7832"/>
          <path d="M410 205C420 195 440 190 470 192V200C445 200 425 206 410 205Z" fill="#a08844"/>
          <path d="M430 183V232M448 181V238M465 180V242" stroke="#e6d496" stroke-width="2" fill="none"/>
          <ellipse cx="498" cy="268" rx="30" ry="14" fill="#7a6428"/><ellipse cx="510" cy="267" rx="18" ry="9" fill="#d8bc70"/>
          <path d="M690 395V365L850 365M690 365L640 385" stroke="#a08a48" stroke-width="2" fill="none"/>

          <g fill="none" stroke="#2285c4" stroke-width="6">
            <path d="M115 190C118 170 140 155 170 145L430 65C480 50 590 45 640 65L1060 255C1085 270 1098 295 1085 310C1075 322 1060 328 1040 335L780 425C730 440 670 435 620 420L170 235C140 225 117 210 115 190Z"/>
            <path d="M175 145V250M432 65V140M668 80V180M150 240V570M537 415V745M770 425V750M1058 255V590M1028 335V680"/>
            <path d="M150 570L537 745M770 750L1030 680" stroke-width="5"/>
          </g>
          <path d="M995 350V700" stroke="#0808e8" stroke-width="10"/>
          <path d="M952 220V270" stroke="#1020c0" stroke-width="9"/>
          <path d="M948 270C925 275 910 290 905 305" fill="none" stroke="#f0b818" stroke-width="6"/>
          <path d="M975 690C985 700 995 690 998 680V705L985 712Z" fill="#f4c8d8"/>

          <path d="M602 660V335" stroke="#7a86d8" stroke-width="3"/>
          <polygon points="602,335 612,400 592,400" fill="#7a86d8"/>
          <polygon points="602,495 612,545 602,620 594,545" fill="#8a86d8"/>
          <path d="M602 660L875 572" stroke="#708870" stroke-width="3"/>
          <polygon points="610,655 720,612 735,612 725,625" fill="#b8d0a8"/>
          <polygon points="815,590 825,578 878,572 832,598" fill="#88a878"/>
          <path d="M602 660L820 755" stroke="#d090a0" stroke-width="3"/>
          <polygon points="635,672 745,720 700,715" fill="#e8a0a8"/>
          <polygon points="775,745 790,730 825,760" fill="#f0b0b0"/>
          <g font-size="42">
            <text x="618" y="322" fill="#3c50b8">ZM</text>
            <text x="618" y="475" fill="#3c50b8">ZC</text>
            <text x="813" y="558" fill="#3a9a60">YM</text>
            <text x="695" y="596" fill="#3a9a60">YC</text>
            <text x="670" y="755" fill="#555566">XC</text>
            <text x="763" y="803" fill="#c83030">XM</text>
          </g>
        </g>
        <g transform="translate(0 600) scale(.33333)">
          <polygon points="830,320 865,300 900,325 900,355 865,378 830,360" fill="#8c8c8c" opacity=".6"/>
          <path d="M830 320L865 342L900 325M865 342V378" stroke="#aaa" fill="none" stroke-width="2"/>
          <path d="M825 365V290" stroke="#1a2ec0" stroke-width="8"/>
          <path d="M825 365L900 335" stroke="#4a8a4a" stroke-width="4"/>
          <path d="M825 365L885 395" stroke="#c81818" stroke-width="8"/>
          <circle cx="824" cy="365" r="15" fill="#ddd"/><circle cx="820" cy="360" r="7" fill="#fff"/>
          <g font-size="38">
            <text x="811" y="282" fill="#2a3ad0">Z</text>
            <text x="896" y="355" fill="#308030">Y</text>
            <text x="880" y="412" fill="#c81818">X</text>
          </g>
        </g>
      </svg>`;
  }
}

class NxRightbar extends NxBase {
  connectedCallback() {
    const items = ['spark1', 'spark2', 'spark3', 'spark4', 'spark5'];
    this.shadowRoot.innerHTML = `
      <style>
        :host { display: block; flex: none; width: 35px; box-sizing: border-box; background: #d6d6d6; }
        .bar { width: 32px; height: 178px; box-sizing: border-box; padding: 3px 0 0 6px; background: #e2e2e2; border-bottom: 1px solid #bbb; border-right: 1px solid #c4c4c4; }
        .grip { height: 3px; margin: 1px 0 5px; width: 22px; background: radial-gradient(circle, #aaa 1px, transparent 1.200px) 0 0 / 4px 3px; }
        .item { position: relative; width: 22px; height: 22px; margin: 0 0 9px 0; }
        .item svg { position: absolute; left: 0; top: -3px; }
        .more { margin-top: -1px; width: 0; height: 0; border: 3px solid transparent; border-right-color: #111; border-left: 0; }
      </style>
      <div class="bar">
        <div class="grip"></div>
        ${items.map(n => `<div class="item"><nx-icon name="${n}" size="22"></nx-icon><svg width="14" height="14" viewBox="0 0 14 14"><path d="M7 0l1.500 4.500L13 2 10 6l4 1-4 1.500L13 12 8.500 10 7 14 5.500 10 1 12l3-3.500L0 7l4-1L1 2l4.500 2.500z" fill="#f8f070" stroke="#d8c030" stroke-width=".4" transform="translate(6 0)"/></svg></div>`).join('')}
        <div class="more"></div>
      </div>`;
  }
}

class NxTaskbar extends NxBase {
  connectedCallback() {
    const task = (icon, label, w, on) => `<div class="task ${on ? 'on' : ''}" style="width:${w}px"><nx-icon name="${icon}" size="16" box="${icon === 'nx' ? 24 : 16}"></nx-icon><span class="label">${label}</span></div>`;
    this.shadowRoot.innerHTML = `
      <style>
        :host { display: flex; align-items: center; flex: none; height: 30px; box-sizing: border-box; color: #fff; font: 12px "Noto Sans CJK SC", sans-serif; border-top: 1px solid #c0906a;
          background: linear-gradient(#3f80ec 0, #2a62dc 8%, #2558d2 60%, #2a5cd6 90%, #1c46a8 100%); }
        .start { display: flex; align-items: center; align-self: stretch; width: 96px; box-sizing: border-box; padding-left: 10px; border-radius: 0 10px 10px 0; font: italic 300 19px "Noto Sans CJK SC", sans-serif; background: linear-gradient(#4f9c4f, #3a8e3a 15%, #3d963d 70%, #2e7a2e); box-shadow: inset -4px 0 4px -2px #1a4a1a, 2px 0 2px #183c90; }
        .start span { margin-left: 6px; letter-spacing: .5px; text-shadow: 1px 1px 1px #1a4a1a; }
        .quick { display: flex; align-items: center; margin-left: 13px; gap: 7px; }
        .chev { margin: -8px 0 0 9px; font: 11px "Liberation Sans", sans-serif; color: #cde; width: 14px; }
        .tasks { display: flex; gap: 1px; margin-left: 5px; }
        .task { display: flex; align-items: center; gap: 3px; height: 26px; box-sizing: border-box; padding-left: 10px; border-radius: 3px; background: linear-gradient(#4f8cf0, #3c78e8); box-shadow: inset 0 1px #76a6f8, 0 0 0 .5px #1e48a8; }
        .label { white-space: pre; }
        .on { background: linear-gradient(#1c4eb0, #2156bc); box-shadow: inset 1px 1px 2px #103078; }
        .mono { font: 10px "Liberation Mono", monospace; }
        .lang { display: flex; flex-direction: column; align-items: center; margin-left: auto; gap: 3px; margin-right: 41px; }
        .tray { display: flex; align-items: center; align-self: stretch; width: 94px; box-sizing: border-box; background: linear-gradient(#1aa0f0, #1290e6 40%, #1088dc); border-top: 1px solid #30b0f0; box-shadow: inset 1px 0 #0a5ab0; }
        .circle { width: 20px; height: 20px; margin-left: -11px; border-radius: 50%; background: #2f80e8; border: 1px solid #9cc4f4; display: flex; align-items: center; justify-content: center; box-sizing: border-box; flex: none; }
        .clock { margin-left: 6px; font: 10.500px "Liberation Mono", monospace; color: #dff; }
        .tray svg { display: block; flex: none; }
      </style>
      <div class="start"><nx-icon name="flag" size="20" box="20"></nx-icon><span>开始</span></div>
      <div class="quick"><nx-icon name="ie" size="16" box="16"></nx-icon><nx-icon name="ball" size="16" box="16"></nx-icon><nx-icon name="qq" size="16" box="16"></nx-icon></div>
      <div class="chev">»</div>
      <div class="tasks">
        ${task('pc', '我的电脑', 158)}
        ${task('ie', '<span class="mono">ug</span>拉伸不能设置片<span class="mono">...</span>', 159)}
        ${task('nx', '<span class="mono">NX 8.5 - </span>加工<span class="mono"> - ...</span>', 158, true)}
      </div>
      <div class="lang">
        <svg width="11" height="9"><path d="M3.500 .5h7v5h-7zM.5 3.500h7v5h-7z" fill="none" stroke="#e8f0ff"/></svg>
        <svg width="6" height="4"><path d="M0 0h6L3 4z" fill="#fff"/></svg>
      </div>
      <div class="tray">
        <div class="circle"><svg width="8" height="10"><path d="M6 1L2 5l4 4" fill="none" stroke="#fff" stroke-width="2"/></svg></div>
        <svg style="margin-left:3px" width="16" height="17"><rect x="1" y="3" width="14" height="13" rx="1" fill="#1888d8" stroke="#0a3a70"/><path d="M2 4l3 2v10" stroke="#fff" fill="none"/><path d="M8 1h6v4H8z" fill="#103a6a"/></svg>
        <svg style="margin-left:2px;margin-top:-5px" width="16" height="17"><circle cx="7" cy="7" r="6" fill="#8a8f9a" stroke="#223"/><circle cx="7" cy="7" r="2.500" fill="#334"/><path d="M12 15l2-4M9 15l2-3" stroke="#8ac0f0"/></svg>
        <span class="clock">13:02</span>
      </div>`;
  }
}

class NxBubble extends NxBase {
  connectedCallback() {
    this.shadowRoot.innerHTML = `
      <style>
        :host { position: absolute; left: 1204px; top: 10px; width: 58px; height: 58px; border-radius: 50%; display: flex; align-items: center; justify-content: center;
          background: radial-gradient(circle at 50% 25%, #d4ecfc 0, #a8d8f8 45%, #7cc2f6 80%, #3f9cf0 100%); box-shadow: 0 2px 3px rgba(0,0,0,.3), inset -1px -2px 3px #3f9cf0;
          font: 11px "Noto Sans", sans-serif; color: #24384a; }
      </style>
      0KB/s`;
  }
}

class NxWatermark extends NxBase {
  connectedCallback() {
    this.shadowRoot.innerHTML = `
      <style>
        :host { position: absolute; left: 976px; top: 695px; display: flex; pointer-events: none; }
        svg { display: block; flex: none; }
        .txt { margin: 14px 0 0 4px; display: flex; flex-direction: column; }
        .big { font: 900 46px/50px "Noto Sans CJK SC", sans-serif; color: #2b7ea2; white-space: nowrap; letter-spacing: .8px;
          text-shadow: 1px 1px 0 #a8d4e4, -1px -1px 0 #a8d4e4, 1px -1px 0 #a8d4e4, -1px 1px 0 #a8d4e4; }
        .big span { font: bold 50px/50px "Liberation Sans", sans-serif; letter-spacing: 0; }
        .url { margin-top: 2px; font: bold 18px/16px "Liberation Sans", sans-serif; letter-spacing: 2.700px; color: #4f9fc8; white-space: nowrap;
          text-shadow: 1px 1px 0 #d4e8f4, -1px -1px 0 #d4e8f4, 1px -1px 0 #d4e8f4, -1px 1px 0 #d4e8f4; }
      </style>
      <svg width="92" height="102" viewBox="976 695 92 102">
        <polygon points="1020,697 1063,720 1063,770 1020,795 978,772 978,720" fill="#3c86c0" fill-opacity=".62" stroke="#d4dce4" stroke-opacity=".8" stroke-width="2"/>
        <path d="M1020 697L1063 720V770L1032 788C1050 760 1055 725 1020 697Z" fill="#30a0b8" fill-opacity=".5"/>
        <path d="M980 770C975 740 1000 745 1020 760" fill="none" stroke="#a8c8dc" stroke-opacity=".4"/>
        <polygon points="1020,720 1041,732 1041,758 1020,770 999,758 999,732" fill="#1c4c88" fill-opacity=".6" stroke="#d4dce4" stroke-width="3"/>
        <path d="M1000 733L1020 745L1040 733M1020 745V769" stroke="#d4dce4" stroke-width="1" fill="none"/>
      </svg>
      <div class="txt"><div class="big"><span>3D</span>世界网</div><div class="url">WWW.3DSJW.COM</div></div>`;
  }
}

customElements.define('nx-icon', NxIcon);
customElements.define('nx-app', NxApp);
customElements.define('nx-titlebar', NxTitlebar);
customElements.define('nx-menubar', NxMenubar);
customElements.define('nx-toolrow', NxToolrow);
customElements.define('nx-toolbar', NxToolbar);
customElements.define('nx-tool', NxTool);
customElements.define('nx-drop', NxDrop);
customElements.define('nx-sep', NxSep);
customElements.define('nx-label', NxLabel);
customElements.define('nx-menu-drop', NxMenuDrop);
customElements.define('nx-status', NxStatus);
customElements.define('nx-main', NxMain);
customElements.define('nx-tabstrip', NxTabstrip);
customElements.define('nx-navigator', NxNavigator);
customElements.define('nx-tree', NxTree);
customElements.define('nx-viewport', NxViewport);
customElements.define('nx-rightbar', NxRightbar);
customElements.define('nx-taskbar', NxTaskbar);
customElements.define('nx-bubble', NxBubble);
customElements.define('nx-watermark', NxWatermark);
</script>
</body>
</html>
